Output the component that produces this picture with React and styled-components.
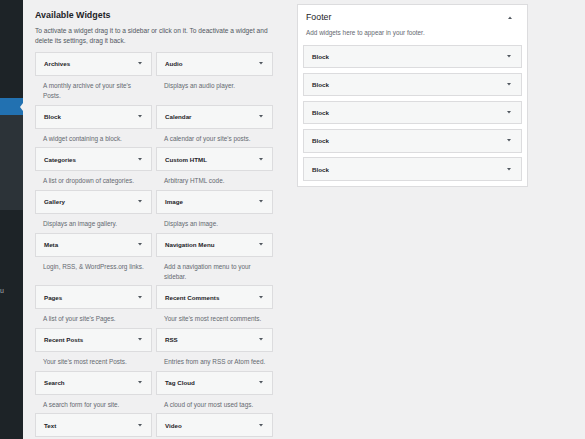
import React from "react";
import styled, { createGlobalStyle } from "styled-components";

const widgets = [
  ["Archives", "A monthly archive of your site's Posts."],
  ["Audio", "Displays an audio player."],
  ["Block", "A widget containing a block."],
  ["Calendar", "A calendar of your site's posts."],
  ["Categories", "A list or dropdown of categories."],
  ["Custom HTML", "Arbitrary HTML code."],
  ["Gallery", "Displays an image gallery."],
  ["Image", "Displays an image."],
  ["Meta", "Login, RSS, & WordPress.org links."],
  ["Navigation Menu", "Add a navigation menu to your sidebar."],
  ["Pages", "A list of your site's Pages."],
  ["Recent Comments", "Your site's most recent comments."],
  ["Recent Posts", "Your site's most recent Posts."],
  ["RSS", "Entries from any RSS or Atom feed."],
  ["Search", "A search form for your site."],
  ["Tag Cloud", "A cloud of your most used tags."],
  ["Text", ""],
  ["Video", ""],
];

const footerBlocks = ["Block", "Block", "Block", "Block", "Block"];

const Caret = ({ up }) => (
  <CaretSvg viewBox="0 0 4 3" width="4" height="3">
    <path d={up ? "M0 3 L2 0.5 L4 3 Z" : "M0 0 L4 0 L2 2.5 Z"} fill="#50575e" />
  </CaretSvg>
);

export default function App() {
  return (
    <>
      <GlobalStyle />
      <Page>
        <AdminMenu>
          <MenuGap />
          <MenuCurrent />
          <SubMenu />
          <MenuRest>
            <MenuText>u</MenuText>
          </MenuRest>
        </AdminMenu>

        <Content>
          <WidgetsColumn>
            <Heading>Available Widgets</Heading>
            <Intro>
              To activate a widget drag it to a sidebar or click on it. To deactivate a widget and
              delete its settings, drag it back.
            </Intro>
            <WidgetGrid>
              {widgets.map(([name, desc]) => (
                <WidgetItem key={name}>
                  <WidgetTop>
                    <WidgetTitle>{name}</WidgetTitle>
                    <Caret />
                  </WidgetTop>
                  <WidgetDesc>{desc}</WidgetDesc>
                </WidgetItem>
              ))}
            </WidgetGrid>
          </WidgetsColumn>

          <SidebarArea>
            <AreaHeader>
              <AreaName>Footer</AreaName>
              <Caret up />
            </AreaHeader>
            <AreaDesc>Add widgets here to appear in your footer.</AreaDesc>
            <AreaList>
              {footerBlocks.map((b, i) => (
                <AreaWidget key={i}>
                  <WidgetTitle>{b}</WidgetTitle>
                  <Caret />
                </AreaWidget>
              ))}
            </AreaList>
          </SidebarArea>
        </Content>
      </Page>
    </>
  );
}

const GlobalStyle = createGlobalStyle`
  html, body {
    margin: 0;
    padding: 0;
    background: #f0f0f1;
  }
  body {
    font-family: "Liberation Sans", Arial, sans-serif;
    color: #1d2327;
  }
`;

const Page = styled.div`
  display: flex;
  height: 439px;
  overflow: hidden;
`;

const AdminMenu = styled.div`
  width: 23px;
  flex-shrink: 0;
  display: flex;
  flex-direction: column;
  background: #1d2327;
`;

const MenuGap = styled.div`
  height: 98px;
`;

const MenuCurrent = styled.div`
  position: relative;
  height: 17px;
  background: #2271b1;

  &::after {
    content: "";
    position: absolute;
    right: 0;
    top: 4.5px;
    border-style: solid;
    border-width: 4px 3.5px 4px 0;
    border-color: transparent #f0f0f1 transparent transparent;
  }
`;

const SubMenu = styled.div`
  height: 95px;
  background: #2c3338;
`;

const MenuRest = styled.div`
  flex: 1;
  overflow: hidden;
  padding-top: 76px;
`;

const MenuText = styled.div`
  font-size: 7px;
  line-height: 10px;
  color: #a7aaad;
`;

const Content = styled.div`
  display: flex;
  align-items: flex-start;
  padding-left: 12px;
`;

const WidgetsColumn = styled.div`
  width: 238px;
  flex-shrink: 0;
`;

const Heading = styled.h2`
  margin: 9px 0 0;
  font-size: 8.9px;
  line-height: 13px;
  font-weight: 600;
`;

const Intro = styled.p`
  margin: 3.7px 0 0;
  font-size: 6.6px;
  line-height: 10px;
  color: #50575e;
`;

const WidgetGrid = styled.div`
  margin-top: 6.3px;
  display: grid;
  grid-template-columns: 117px 117px;
  column-gap: 4px;
`;

const WidgetItem = styled.div`
  display: flex;
  flex-direction: column;
`;

const WidgetTop = styled.div`
  height: 24px;
  box-sizing: border-box;
  display: flex;
  align-items: center;
  justify-content: space-between;
  padding: 0 9.5px 0 8px;
  background: #f6f7f7;
  border: 1px solid #dcdcde;
`;

const WidgetTitle = styled.span`
  font-size: 6.2px;
  font-weight: 700;
  color: #1d2327;
`;

const CaretSvg = styled.svg`
  display: block;
`;

const WidgetDesc = styled.div`
  flex: 1;
  padding: 5px 4px 3.67px 8px;
  font-size: 6.4px;
  line-height: 10px;
  color: #646970;
  min-height: 10px;
`;

const SidebarArea = styled.div`
  margin: 4px 0 0 24px;
  width: 231px;
  box-sizing: border-box;
  background: #fff;
  border: 1px solid #dcdcde;
  padding: 5.5px 0 5px;
`;

const AreaHeader = styled.div`
  display: flex;
  align-items: center;
  justify-content: space-between;
  padding: 0 15px 0 8px;
  height: 13px;
`;

const AreaName = styled.h2`
  margin: 0;
  font-size: 8.8px;
  line-height: 13px;
  font-weight: 500;
`;

const AreaDesc = styled.p`
  margin: 4.5px 0 0;
  padding: 0 8px;
  font-size: 6.4px;
  line-height: 10px;
  color: #646970;
`;

const AreaList = styled.div`
  margin-top: 6.5px;
  padding: 0 5px;
  display: flex;
  flex-direction: column;
  gap: 4.7px;
`;

const AreaWidget = styled.div`
  height: 23.5px;
  box-sizing: border-box;
  display: flex;
  align-items: center;
  justify-content: space-between;
  padding: 0 10px 0 8px;
  background: #f6f7f7;
  border: 1px solid #dcdcde;
`;
